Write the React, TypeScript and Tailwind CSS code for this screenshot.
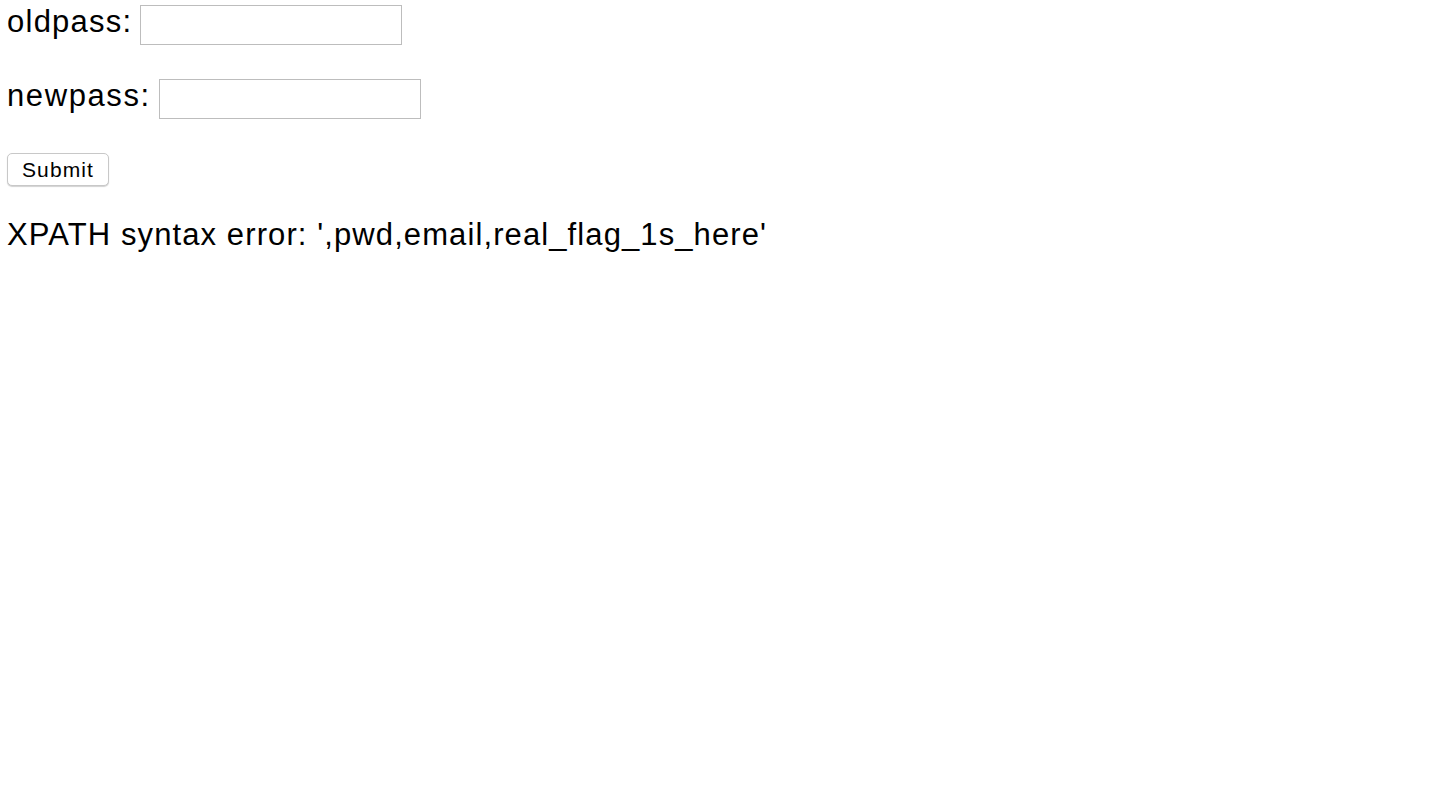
export default function App() {
  return (
    <div className="min-h-screen bg-white px-[7px] font-['Liberation_Sans',Arial,sans-serif] text-black">
      <form className="flex flex-col items-start" onSubmit={(e) => e.preventDefault()}>
        {/* old password */}
        <div className="mt-[5px] flex h-10 items-center">
          <label className="pb-[7px] text-[31px] leading-none tracking-[1.25px]">oldpass:</label>
          <input
            type="password"
            className="ml-[8px] h-10 w-[262px] border border-[#bdbdbd] bg-white outline-none"
          />
        </div>

        {/* new password */}
        <div className="mt-[34px] flex h-10 items-center">
          <label className="pb-[7px] text-[31px] leading-none tracking-[1.6px]">newpass:</label>
          <input
            type="password"
            className="ml-[8px] h-10 w-[262px] border border-[#bdbdbd] bg-white outline-none"
          />
        </div>

        <button
          type="submit"
          className="mt-[34px] h-[33px] w-[102px] rounded-[5px] border border-[#c8c8c8] bg-white text-[21px] tracking-[1.1px] shadow-[0_1px_1px_rgba(0,0,0,0.18)]"
        >
          Submit
        </button>
      </form>

      <p className="mt-[33px] text-[31px] leading-none tracking-[1.1px]">
        XPATH syntax error: ',pwd,email,real_flag_1s_here'
      </p>
    </div>
  );
}
